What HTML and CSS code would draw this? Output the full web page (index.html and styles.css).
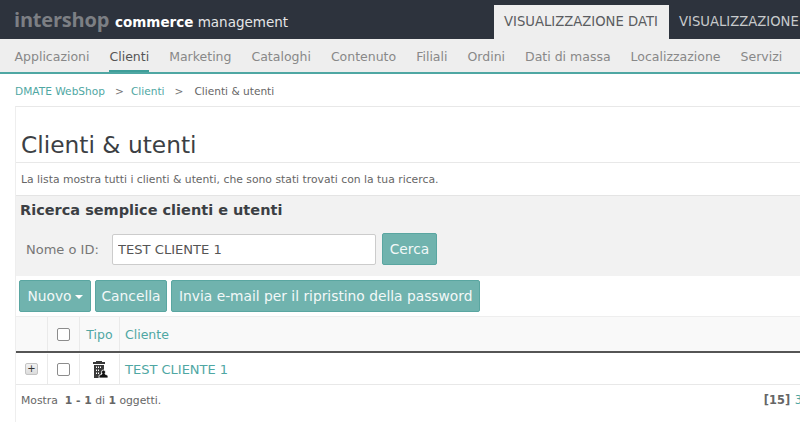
FILE: index.html
```html
<!DOCTYPE html>
<html lang="it">
<head>
<meta charset="utf-8">
<title>Clienti &amp; utenti</title>
<link rel="stylesheet" href="styles.css">
</head>
<body>
<header class="topbar">
  <div class="brand"><span class="logo">intershop</span><span class="product"><b>commerce</b> management</span></div>
  <div class="tabs"><span class="tab active">VISUALIZZAZIONE DATI</span><span class="tab">VISUALIZZAZIONE</span></div>
</header>
<nav class="mainnav">
  <a>Applicazioni</a><a class="current">Clienti</a><a>Marketing</a><a>Cataloghi</a><a>Contenuto</a><a>Filiali</a><a>Ordini</a><a>Dati di massa</a><a>Localizzazione</a><a>Servizi</a>
</nav>
<div class="crumbs"><a>DMATE WebShop</a><i>&gt;</i><a>Clienti</a><i>&gt;</i><span>Clienti &amp; utenti</span></div>
<main class="panel">
  <h1>Clienti &amp; utenti</h1>
  <p class="desc">La lista mostra tutti i clienti &amp; utenti, che sono stati trovati con la tua ricerca.</p>
  <section class="search">
    <h2>Ricerca semplice clienti e utenti</h2>
    <div class="search-row">
      <label for="q">Nome o ID:</label>
      <input id="q" type="text" value="TEST CLIENTE 1">
      <button class="btn btn-search">Cerca</button>
    </div>
  </section>
  <div class="toolbar">
    <button class="btn btn-fixed">Nuovo<span class="caret"></span></button>
    <button class="btn btn-fixed">Cancella</button>
    <button class="btn">Invia e-mail per il ripristino della password</button>
  </div>
  <div class="table">
    <div class="tr thead">
      <div class="c1"></div>
      <div class="c2"><span class="check"></span></div>
      <div class="c3">Tipo</div>
      <div class="c4">Cliente</div>
    </div>
    <div class="tr tbody">
      <div class="c1"><span class="plus">+</span></div>
      <div class="c2"><span class="check"></span></div>
      <div class="c3">
        <svg width="16" height="17" viewBox="0 0 16 17" aria-hidden="true"><path fill="#3a3a3a" d="M4 0h6v1h3v2H1V1h3zM2 4h10v5h-1.500v3H9v5H2zM4 5.500v1.500h1V5.500zm2 0v1.500h1V5.500zm2 0v1.500h1V5.500zM4 8.500V10h1V8.500zm2 0V10h1V8.500zM4 11.500V13h1v-1.500zm2 0V13h1v-1.500z"/><path fill="#111" stroke="#fff" stroke-width=".8" d="M11.500 9a2 2 0 0 1 2 2.100c0 .7-.3 1.400-.6 1.800l3.100 1.600V17H7v-2.500l3.100-1.600c-.3-.4-.6-1.100-.6-1.800A2 2 0 0 1 11.500 9z"/></svg>
      </div>
      <div class="c4"><a>TEST CLIENTE 1</a></div>
    </div>
  </div>
  <div class="pager">
    <span>Mostra &nbsp;<b>1 - 1</b> di <b>1</b> oggetti.</span>
    <span class="pages"><b>[15]</b> <a>3</a></span>
  </div>
</main>
</body>
</html>
```
FILE: styles.css
```css
* { box-sizing: border-box; }
html, body { margin: 0; height: 422px; overflow: hidden; background: #fff; }
body { font-family: "DejaVu Sans", Verdana, sans-serif; color: #555; font-size: 12px; width: 800px; }
a { color: #4fa7a3; }

.topbar { height: 39px; background: #2d333d; display: flex; justify-content: space-between; overflow: hidden; }
.brand { display: flex; align-items: baseline; padding: 9px 0 0 14px; white-space: nowrap; }
.logo { font-family: "Open Sans", "DejaVu Sans", sans-serif; font-size: 20px; font-weight: 700; color: #7c7f84; letter-spacing: -0.200px; line-height: 22px; width: 101px; flex: none; }
.product { font-size: 13.500px; color: #e4e5e7; }
.product b { color: #fff; }
.tabs { width: 306px; flex: none; display: flex; padding-top: 5px; white-space: nowrap; }
.tab { padding: 0 10px; line-height: 33px; height: 34px; font-size: 13.200px; color: #c8cacc; }
.tab.active { background: #eee; color: #5a5c60; width: 175px; flex: none; }

.mainnav { height: 35px; background: #eee; border-bottom: 2px solid #4fa7a3; display: flex; gap: 20px; padding-left: 14.500px; font-size: 12.500px; white-space: nowrap; overflow: hidden; }
.mainnav a { color: #888; height: 34px; line-height: 36px; display: block; }
.mainnav a.current { color: #555; border-bottom: 3px solid #3f9e99; }

.crumbs { height: 32px; padding: 10px 0 0 15px; font-size: 10.600px; line-height: 15px; display: flex; color: #666; white-space: nowrap; }
.crumbs i { font-style: normal; margin: 0 7px 0 10px; color: #777; }
.crumbs span { margin-left: 4px; }

.panel { margin-left: 15px; border-top: 1px solid #e8e8e8; border-left: 1px solid #eee; height: 316px; }
h1 { margin: 0; padding: 0 0 0 5px; height: 56px; font-size: 23.300px; font-weight: 400; color: #3c3f44; line-height: 76px; border-bottom: 1px solid #e8e8e8; }
.desc { margin: 0; height: 32px; padding-left: 5px; font-size: 10.800px; line-height: 33px; color: #666; white-space: nowrap; }
.search { height: 81px; background: #f2f2f2; border-top: 1px solid #e4e4e4; padding: 0 0 0 4px; }
h2 { margin: 0; height: 27px; font-size: 14.500px; line-height: 29px; font-weight: 700; color: #3c3f44; white-space: nowrap; }
.search-row { display: flex; align-items: center; padding: 10px 0 0 6px; }
label { width: 86px; font-size: 13px; color: #777; }
input { width: 264px; height: 31px; border: 1px solid #ccc; border-radius: 2px; padding: 0 5px; font: 13.100px "DejaVu Sans", Verdana, sans-serif; color: #555; background: #fff; margin-right: 6px; }

.btn { height: 32px; padding: 0 7px; font: 13.800px "DejaVu Sans", Verdana, sans-serif; color: #f2f8f8; background: #70b3ae; border: 1px solid #5aa6a1; border-radius: 2px; white-space: nowrap; }
.btn-search { width: 55px; padding: 0; }
.btn-fixed { width: 72px; padding: 0; }
.toolbar { height: 40px; display: flex; gap: 4px; padding: 4px 0 0 3px; }
.caret { display: inline-block; margin-left: 3px; vertical-align: middle; border: 4px solid transparent; border-top-color: #fff; border-bottom: 0; }

.table { border-top: 1px solid #eee; }
.tr { display: flex; align-items: stretch; }
.tr > div { display: flex; align-items: center; border-right: 1px solid #eaeaea; }
.tr > .c4 { border-right: 0; flex: 1; padding-left: 5px; }
.c1 { width: 32px; justify-content: center; }
.c2 { width: 32px; justify-content: center; }
.c3 { width: 40px; justify-content: center; }
.thead { height: 36px; background: #f9f9f9; border-bottom: 2px solid #555; color: #4fa7a3; font-size: 12.500px; }
.tbody { height: 32px; padding-top: 1px; background: #fff; border-bottom: 1px solid #e8e8e8; font-size: 13px; }
.check { width: 13px; height: 13px; display: block; border: 1.500px solid #8c8c8c; border-radius: 2px; background: #fff; }
.plus { width: 13px; height: 12px; display: block; border: 1px solid #c4c4c4; border-radius: 2px; background: linear-gradient(#f2f2f2, #dcdcdc); color: #333; font-size: 10px; line-height: 10px; text-align: center; }

.pager { display: flex; justify-content: space-between; padding: 8px 0 0 5px; font-size: 10.800px; line-height: 15px; color: #666; white-space: nowrap; }
.pages { margin-right: -2px; font-size: 11.400px; word-spacing: 1px; }
```
